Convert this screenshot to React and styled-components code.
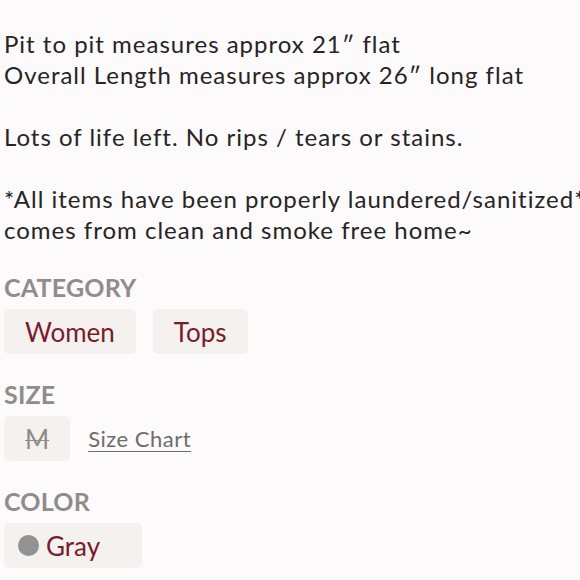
import React from 'react'
import styled, { createGlobalStyle } from 'styled-components'

const GlobalStyle = createGlobalStyle`
  html, body {
    margin: 0;
    padding: 0;
    background: #fcfafa;
  }
  body {
    font-family: Lato, "Open Sans", sans-serif;
  }
`

const Page = styled.div`
  width: 580px;
  height: 580px;
  overflow: hidden;
  padding: 28px 0 0 4px;
  box-sizing: border-box;
  background: #fcfafa;
`

const Description = styled.div`
  font-size: 24px;
  line-height: 31px;
  letter-spacing: 1px;
  color: #262424;
  white-space: pre;
`

const Section = styled.section`
  margin-top: ${p => p.$top || 25}px;
`

const Heading = styled.h3`
  margin: 0;
  font-size: 25px;
  line-height: 30px;
  font-weight: 700;
  color: #8f8c8a;
  letter-spacing: 0.2px;
`

const Row = styled.div`
  display: flex;
  align-items: center;
  gap: ${p => p.$gap || 17}px;
  margin-top: 7px;
`

const Chip = styled.div`
  display: flex;
  align-items: center;
  gap: 7px;
  height: 45px;
  padding: ${p => p.$pad || '0 21px'};
  box-sizing: border-box;
  background: #f4f1ef;
  border-radius: 5px;
  font-size: 26px;
  color: ${p => (p.$muted ? '#8f8c8a' : '#7b1c2c')};
  text-decoration: ${p => (p.$muted ? 'line-through' : 'none')};
  text-decoration-thickness: 1px;
`

const Dot = styled.span`
  width: 21px;
  height: 21px;
  border-radius: 50%;
  background: ${p => p.$color};
`

const ChartLink = styled.a`
  font-size: 22px;
  letter-spacing: 0.5px;
  color: #6f6c6a;
  text-decoration: underline;
  text-underline-offset: 4px;
  text-decoration-thickness: 1px;
`

const description = `Pit to pit measures approx 21\u2033 flat
Overall Length measures approx 26\u2033 long flat

Lots of life left. No rips / tears or stains.

*All items have been properly laundered/sanitized*
comes from clean and smoke free home~`

export default function App() {
  return (
    <>
      <GlobalStyle />
      <Page>
        <Description>{description}</Description>

        <Section $top={27}>
          <Heading>CATEGORY</Heading>
          <Row>
            <Chip>Women</Chip>
            <Chip>Tops</Chip>
          </Row>
        </Section>

        <Section>
          <Heading>SIZE</Heading>
          <Row $gap={18}>
            <Chip $muted>M</Chip>
            <ChartLink href="#">Size Chart</ChartLink>
          </Row>
        </Section>

        <Section>
          <Heading>COLOR</Heading>
          <Row>
            <Chip $pad="0 42px 0 14px">
              <Dot $color="#929292" />
              Gray
            </Chip>
          </Row>
        </Section>
      </Page>
    </>
  )
}
